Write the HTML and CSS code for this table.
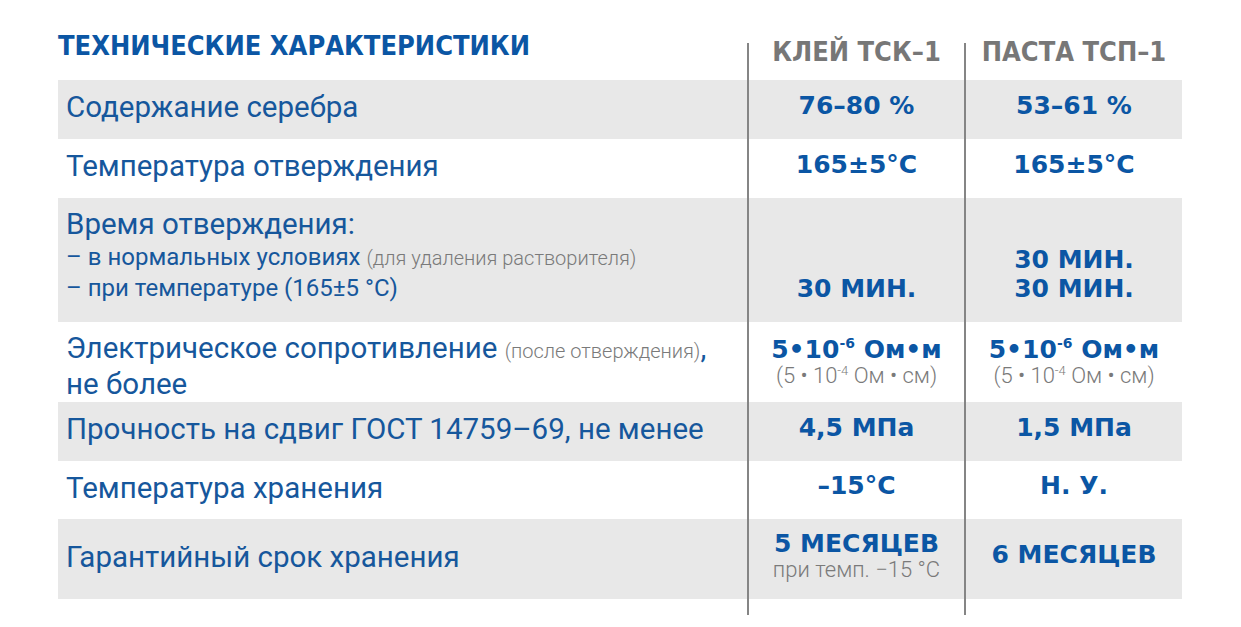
FILE: index.html
```html
<!DOCTYPE html>
<html lang="ru">
<head>
<meta charset="utf-8">
<title>Технические характеристики</title>
<link rel="stylesheet" href="styles.css">
</head>
<body>
<div class="table">
  <div class="row head">
    <div class="cell title-cell"><h1 class="title">ТЕХНИЧЕСКИЕ ХАРАКТЕРИСТИКИ</h1></div>
    <div class="cell val head-val"><span class="col-name">КЛЕЙ ТСК–1</span></div>
    <div class="cell val head-val"><span class="col-name">ПАСТА ТСП–1</span></div>
  </div>

  <div class="row gray h59">
    <div class="cell label-cell"><span class="label">Содержание серебра</span></div>
    <div class="cell val"><span class="v">76–80 %</span></div>
    <div class="cell val"><span class="v">53–61 %</span></div>
  </div>

  <div class="row h59">
    <div class="cell label-cell"><span class="label">Температура отверждения</span></div>
    <div class="cell val"><span class="v">165±5°C</span></div>
    <div class="cell val"><span class="v">165±5°C</span></div>
  </div>

  <div class="row gray h124">
    <div class="cell label-cell multi">
      <span class="label l1">Время отверждения:</span>
      <span class="sub">– в нормальных условиях <span class="note">(для удаления растворителя)</span></span>
      <span class="sub">– при температуре (165±5 °C)</span>
    </div>
    <div class="cell val bottom"><span class="v vl">30 МИН.</span></div>
    <div class="cell val bottom"><span class="v vl">30 МИН.</span><span class="v vl">30 МИН.</span></div>
  </div>

  <div class="row h80">
    <div class="cell label-cell multi2">
      <span class="label l2">Электрическое сопротивление <span class="note">(после отверждения)</span>,</span>
      <span class="label l2">не более</span>
    </div>
    <div class="cell val stack"><span class="v">5•10<sup>-6</sup> Ом•м</span><span class="small">(5 • 10<sup>-4</sup> Ом • см)</span></div>
    <div class="cell val stack"><span class="v">5•10<sup>-6</sup> Ом•м</span><span class="small">(5 • 10<sup>-4</sup> Ом • см)</span></div>
  </div>

  <div class="row gray h59">
    <div class="cell label-cell"><span class="label">Прочность на сдвиг ГОСТ 14759–69, не менее</span></div>
    <div class="cell val"><span class="v">4,5 МПа</span></div>
    <div class="cell val"><span class="v">1,5 МПа</span></div>
  </div>

  <div class="row h58">
    <div class="cell label-cell"><span class="label">Температура хранения</span></div>
    <div class="cell val"><span class="v">–15°C</span></div>
    <div class="cell val"><span class="v">Н. У.</span></div>
  </div>

  <div class="row gray h80">
    <div class="cell label-cell"><span class="label">Гарантийный срок хранения</span></div>
    <div class="cell val stack stack-up"><span class="v">5 МЕСЯЦЕВ</span><span class="small">при темп. −15 °C</span></div>
    <div class="cell val"><span class="v">6 МЕСЯЦЕВ</span></div>
  </div>

  <div class="row foot">
    <div class="cell"></div>
    <div class="cell val"></div>
    <div class="cell val"></div>
  </div>
</div>
</body>
</html>
```

FILE: styles.css
```css
html, body {
  margin: 0;
  padding: 0;
  background: #ffffff;
}

body {
  padding: 33px 0 0 58px;
  width: 1124px;
}

.table {
  display: flex;
  flex-direction: column;
}

.row {
  display: grid;
  grid-template-columns: 689px 217px 218px;
}

.row.gray {
  background: #e8e8e8;
}

.h59 { height: 59px; }
.h58 { height: 58px; }
.h80 { height: 80px; }
.h124 { height: 124px; }

.head { height: 47px; }
.foot { height: 16px; }

.cell {
  display: flex;
  align-items: center;
}

.val {
  border-left: 2px solid #858585;
  justify-content: center;
  flex-direction: column;
  text-align: center;
  padding-bottom: 8px;
}

.head-val {
  margin-top: 10px;
  justify-content: flex-start;
  padding-bottom: 0;
}

.title-cell {
  align-items: flex-start;
}

.title {
  margin: 0;
  font-family: "DejaVu Sans Condensed", "DejaVu Sans", sans-serif;
  font-stretch: condensed;
  font-weight: 700;
  font-size: 27px;
  line-height: 26px;
  color: #0b56a4;
  white-space: nowrap;
}

.col-name {
  font-family: "DejaVu Sans Condensed", "DejaVu Sans", sans-serif;
  font-stretch: condensed;
  font-weight: 700;
  font-size: 27px;
  line-height: 24px;
  color: #777777;
  margin-top: -3px;
  white-space: nowrap;
}

.label-cell {
  padding-left: 8px;
  padding-bottom: 5px;
}

.label {
  font-family: "Roboto", "Noto Sans", sans-serif;
  font-weight: 400;
  font-size: 29.5px;
  line-height: 30px;
  color: #16579c;
  white-space: nowrap;
}

.multi {
  flex-direction: column;
  align-items: flex-start;
  justify-content: flex-start;
  padding-top: 9px;
  padding-bottom: 0;
}

.l1 {
  line-height: 35px;
}

.sub {
  font-family: "Roboto", "Noto Sans", sans-serif;
  font-weight: 400;
  font-size: 24px;
  line-height: 30px;
  color: #16579c;
  white-space: nowrap;
}

.note {
  font-size: 20px;
  font-weight: 300;
  color: #7a7a7a;
}

.multi2 {
  flex-direction: column;
  align-items: flex-start;
  justify-content: flex-start;
  padding-top: 10px;
  padding-bottom: 0;
}

.l2 {
  line-height: 33px;
}

.v {
  font-family: "DejaVu Sans", sans-serif;
  font-weight: 700;
  font-size: 25px;
  line-height: 28px;
  color: #0b56a4;
  white-space: nowrap;
}

.v sup {
  font-size: 14px;
  line-height: 0;
  vertical-align: 10px;
}

.small {
  font-family: "Roboto", "Noto Sans", sans-serif;
  font-weight: 300;
  font-size: 22px;
  line-height: 24px;
  color: #7a7a7a;
  white-space: nowrap;
}

.small sup {
  font-size: 13px;
  line-height: 0;
  vertical-align: 8px;
}

.stack {
  padding-bottom: 0;
}

.stack-up {
  padding-bottom: 7px;
}

.bottom {
  justify-content: flex-end;
  padding-bottom: 19px;
}

.vl {
  line-height: 29px;
}
```
